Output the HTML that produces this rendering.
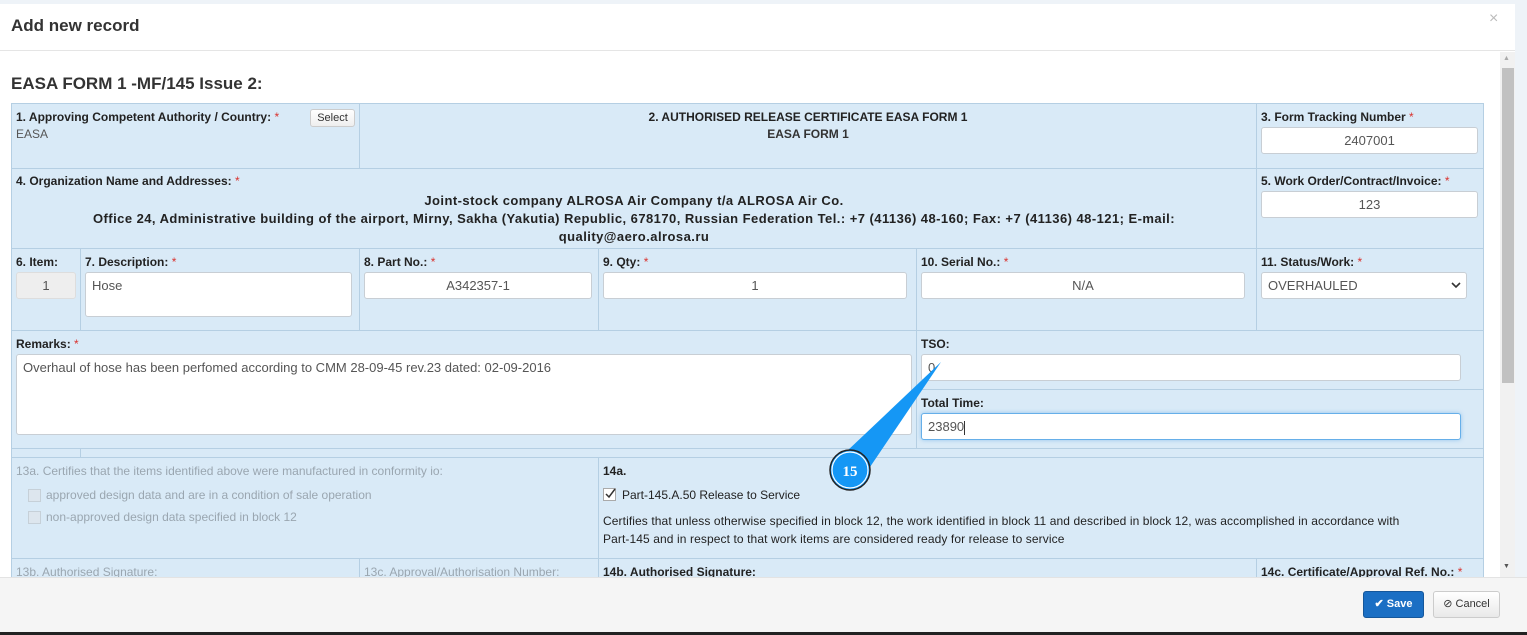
<!DOCTYPE html>
<html><head><meta charset="utf-8"><style>
*{box-sizing:border-box;margin:0;padding:0}
body{width:1527px;height:635px;overflow:hidden;background:#eef3f8;font-family:"Liberation Sans",Arial,sans-serif;font-size:12px;color:#333;position:relative}
.a{position:absolute}
.modal{left:0;top:4px;width:1515px;height:631px;background:#fff}
.c{position:absolute;background:#d9eaf7;border:1px solid #b5cfe3}
.l{position:absolute;font-size:12px;color:#222;white-space:nowrap}
.b{font-weight:bold}
.r{color:#d9322e;font-weight:normal}
.in{position:absolute;background:#fff;border:1px solid #c8ced4;border-radius:3px;font-size:13px;color:#555;padding:0 6px;line-height:26px;white-space:nowrap}
.ctr{text-align:center}
.dim{color:#9aa6b0}
.cb{position:absolute;width:13px;height:13px;border:1px solid #c6d0d8;background:#dde6ee}
</style></head><body>
<div class="a modal"></div>
<div class="a" style="left:0;top:50px;width:1515px;height:1px;background:#e5e5e5"></div>
<div class="l" style="left:11px;top:16px;font-size:17px;font-weight:bold;color:#333">Add new record</div>
<div class="l" style="left:1489px;top:10px;font-size:16px;color:#bbb">×</div>
<div class="l" style="left:11px;top:74px;font-size:17px;font-weight:bold;color:#333">EASA FORM 1 -MF/145 Issue 2:</div>

<div class="a" style="left:1500px;top:52px;width:15px;height:525px;background:#f1f1f1"></div>
<div class="a" style="left:1502px;top:68px;width:12px;height:315px;background:#c1c1c1"></div>
<div class="l" style="left:1503px;top:55px;font-size:7px;color:#aaa">▲</div>
<div class="l" style="left:1503px;top:563px;font-size:7px;color:#555">▼</div>

<div class="c" style="left:11px;top:103px;width:349px;height:66px"></div>
<div class="c" style="left:359px;top:103px;width:898px;height:66px"></div>
<div class="c" style="left:1256px;top:103px;width:228px;height:66px"></div>
<div class="c" style="left:11px;top:168px;width:1246px;height:81px"></div>
<div class="c" style="left:1256px;top:168px;width:228px;height:81px"></div>
<div class="c" style="left:11px;top:248px;width:70px;height:83px"></div>
<div class="c" style="left:80px;top:248px;width:280px;height:83px"></div>
<div class="c" style="left:359px;top:248px;width:240px;height:83px"></div>
<div class="c" style="left:598px;top:248px;width:319px;height:83px"></div>
<div class="c" style="left:916px;top:248px;width:341px;height:83px"></div>
<div class="c" style="left:1256px;top:248px;width:228px;height:83px"></div>
<div class="c" style="left:11px;top:330px;width:906px;height:119px"></div>
<div class="c" style="left:916px;top:330px;width:568px;height:60px"></div>
<div class="c" style="left:916px;top:389px;width:568px;height:60px"></div>
<div class="c" style="left:11px;top:448px;width:70px;height:10px"></div>
<div class="c" style="left:80px;top:448px;width:1404px;height:10px"></div>
<div class="c" style="left:11px;top:457px;width:588px;height:102px"></div>
<div class="c" style="left:598px;top:457px;width:886px;height:102px"></div>
<div class="c" style="left:11px;top:558px;width:349px;height:30px"></div>
<div class="c" style="left:359px;top:558px;width:240px;height:30px"></div>
<div class="c" style="left:598px;top:558px;width:659px;height:30px"></div>
<div class="c" style="left:1256px;top:558px;width:228px;height:30px"></div>

<div class="l b" style="left:16px;top:110px">1. Approving Competent Authority / Country: <span class="r">*</span></div>
<div class="a" style="left:310px;top:109px;width:45px;height:18px;border:1px solid #ccc;border-radius:3px;background:linear-gradient(#fff,#eee);font-size:11px;text-align:center;line-height:16px;color:#333">Select</div>
<div class="l" style="left:16px;top:127px;color:#555">EASA</div>
<div class="l ctr b" style="left:359px;top:110px;width:898px">2. AUTHORISED RELEASE CERTIFICATE EASA FORM 1</div>
<div class="l ctr" style="left:359px;top:127px;width:898px;color:#333;font-weight:bold;font-weight:600">EASA FORM 1</div>
<div class="l b" style="left:1261px;top:110px">3. Form Tracking Number <span class="r">*</span></div>
<div class="in ctr" style="left:1261px;top:127px;width:217px;height:27px">2407001</div>

<div class="l b" style="left:16px;top:174px">4. Organization Name and Addresses: <span class="r">*</span></div>
<div class="l ctr" style="left:11px;top:192px;width:1246px;font-weight:bold;font-size:13px;line-height:18px;letter-spacing:0.45px;white-space:normal;padding:0 60px">Joint-stock company ALROSA Air Company t/a ALROSA Air Co.<br>Office 24, Administrative building of the airport, Mirny, Sakha (Yakutia) Republic, 678170, Russian Federation Tel.: +7 (41136) 48-160; Fax: +7 (41136) 48-121; E-mail:<br>quality@aero.alrosa.ru</div>
<div class="l b" style="left:1261px;top:174px">5. Work Order/Contract/Invoice: <span class="r">*</span></div>
<div class="in ctr" style="left:1261px;top:191px;width:217px;height:27px">123</div>

<div class="l b" style="left:16px;top:255px">6. Item:</div>
<div class="in ctr" style="left:16px;top:272px;width:60px;height:27px;background:#eee;border-color:#ddd">1</div>
<div class="l b" style="left:85px;top:255px">7. Description: <span class="r">*</span></div>
<div class="in" style="left:85px;top:272px;width:267px;height:45px">Hose</div>
<div class="l b" style="left:364px;top:255px">8. Part No.: <span class="r">*</span></div>
<div class="in ctr" style="left:364px;top:272px;width:228px;height:27px">A342357-1</div>
<div class="l b" style="left:603px;top:255px">9. Qty: <span class="r">*</span></div>
<div class="in ctr" style="left:603px;top:272px;width:304px;height:27px">1</div>
<div class="l b" style="left:921px;top:255px">10. Serial No.: <span class="r">*</span></div>
<div class="in ctr" style="left:921px;top:272px;width:324px;height:27px">N/A</div>
<div class="l b" style="left:1261px;top:255px">11. Status/Work: <span class="r">*</span></div>
<div class="in" style="left:1261px;top:272px;width:206px;height:27px">OVERHAULED</div>
<svg class="a" style="left:1451px;top:281px" width="10" height="8"><path d="M1 2 L5 6 L9 2" fill="none" stroke="#333" stroke-width="1.6"/></svg>

<div class="l b" style="left:16px;top:337px">Remarks: <span class="r">*</span></div>
<div class="in" style="left:16px;top:354px;width:896px;height:81px;line-height:26px">Overhaul of hose has been perfomed according to CMM 28-09-45 rev.23 dated: 02-09-2016</div>
<div class="l b" style="left:921px;top:337px">TSO:</div>
<div class="in" style="left:921px;top:354px;width:540px;height:27px">0</div>
<div class="l b" style="left:921px;top:396px">Total Time:</div>
<div class="in" style="left:921px;top:413px;width:540px;height:27px;border-color:#66afe9;box-shadow:0 0 4px rgba(102,175,233,.6)">23890<span style="border-left:1px solid #333;height:14px;display:inline-block;vertical-align:middle"></span></div>

<div class="l dim" style="left:16px;top:464px">13a. Certifies that the items identified above were manufactured in conformity io:</div>
<div class="cb" style="left:28px;top:489px"></div>
<div class="l dim" style="left:46px;top:488px">approved design data and are in a condition of sale operation</div>
<div class="cb" style="left:28px;top:511px"></div>
<div class="l dim" style="left:46px;top:510px">non-approved design data specified in block 12</div>
<div class="l b" style="left:603px;top:464px">14a.</div>
<div class="a" style="left:603px;top:488px;width:13px;height:13px;background:#fff;border:1px solid #aaa"></div>
<svg class="a" style="left:604px;top:487px" width="13" height="13"><path d="M2 7 L5 10 L11 2" fill="none" stroke="#333" stroke-width="1.5"/></svg>
<div class="l" style="left:622px;top:488px">Part-145.A.50 Release to Service</div>
<div class="l" style="left:603px;top:512px;line-height:18px;letter-spacing:0.1px">Certifies that unless otherwise specified in block 12, the work identified in block 11 and described in block 12, was accomplished in accordance with<br>Part-145 and in respect to that work items are considered ready for release to service</div>

<div class="l dim" style="left:16px;top:565px">13b. Authorised Signature:</div>
<div class="l dim" style="left:364px;top:565px">13c. Approval/Authorisation Number:</div>
<div class="l b" style="left:603px;top:565px">14b. Authorised Signature:</div>
<div class="l b" style="left:1261px;top:565px">14c. Certificate/Approval Ref. No.: <span class="r">*</span></div>

<div class="a" style="left:0;top:577px;width:1527px;height:55px;background:#f5f5f5;border-top:1px solid #e3e3e3"></div>
<div class="a" style="left:0;top:632px;width:1527px;height:3px;background:#222"></div>
<div class="a" style="left:1363px;top:591px;width:61px;height:27px;background:#1b6fc4;border:1px solid #15579b;border-radius:3px;color:#fff;font-weight:bold;font-size:11px;line-height:25px;text-align:center">✔ Save</div>
<div class="a" style="left:1433px;top:591px;width:67px;height:27px;background:linear-gradient(#fff,#e9e9e9);border:1px solid #ccc;border-radius:3px;color:#333;font-size:11px;line-height:25px;text-align:center">⊘ Cancel</div>

<svg class="a" style="left:820px;top:355px" width="130" height="140">
<path d="M121 7 L26 97 L50 112 Z" fill="#1597f5"/>
<circle cx="30" cy="115" r="20" fill="#1597f5" stroke="#222" stroke-width="1.5"/>
<circle cx="30" cy="115" r="18" fill="none" stroke="#fff" stroke-width="1.2"/>
<text x="30" y="121" text-anchor="middle" fill="#fff" font-family="Liberation Serif,serif" font-weight="bold" font-size="15">15</text>
</svg>
</body></html>
